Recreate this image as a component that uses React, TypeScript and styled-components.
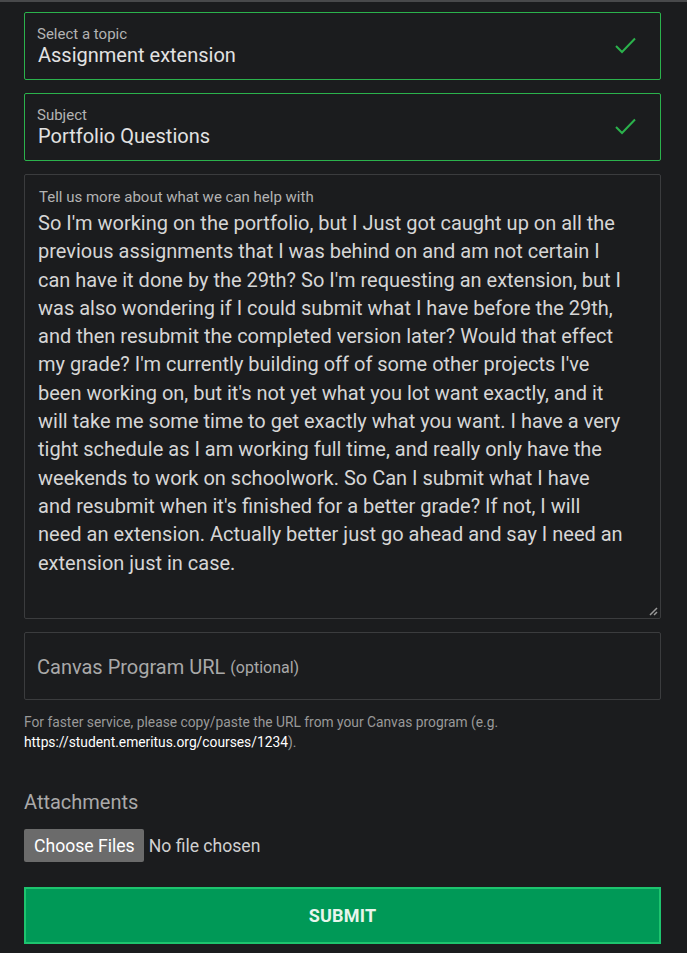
import React from "react";
import styled, { createGlobalStyle } from "styled-components";

const Global = createGlobalStyle`
  html, body { margin: 0; padding: 0; background: #1b1c1e; }
  body { font-family: Roboto, "Noto Sans", sans-serif; }
  * { box-sizing: border-box; }
`;

const Page = styled.div`
  border-top: 2px solid #48494b;
  padding: 10px 26px 0 24px;
  display: flex;
  flex-direction: column;
  min-height: 953px;
`;

const Field = styled.div<{ $valid?: boolean }>`
  height: 68px;
  border: 1px solid ${(p) => (p.$valid ? "#2bb24c" : "#3b3c3e")};
  border-radius: 2px;
  padding: 12px 12px 0 12px;
  display: flex;
  align-items: flex-start;
  justify-content: space-between;
  margin-bottom: 13px;
`;

const FieldText = styled.div`
  display: flex;
  flex-direction: column;
`;

const Label = styled.span`
  font-size: 15px;
  line-height: 18px;
  color: #b3b3b3;
`;

const Value = styled.span`
  font-size: 20px;
  line-height: 24px;
  color: #e2e2e2;
  padding-left: 1px;
`;

const Check = styled.svg`
  width: 24px;
  height: 24px;
  margin-top: 9px;
  margin-right: 11px;
`;

const TextArea = styled.div`
  position: relative;
  height: 445px;
  border: 1px solid #3b3c3e;
  border-radius: 2px;
  padding: 13px 12px 0 13px;
  margin-bottom: 13px;
`;

const AreaLabel = styled.div`
  font-size: 15px;
  line-height: 18px;
  color: #b3b3b3;
  margin-left: 1px;
`;

const Body = styled.div`
  font-size: 20px;
  line-height: 28.3px;
  color: #d6d6d6;
  margin-top: 3px;
`;

const Line = styled.span`
  display: block;
  white-space: nowrap;
`;

const Grip = styled.svg`
  position: absolute;
  right: 2px;
  bottom: 2px;
  width: 10px;
  height: 10px;
`;

const UrlField = styled.div`
  height: 68px;
  border: 1px solid #3b3c3e;
  border-radius: 2px;
  padding: 0 12px;
  display: flex;
  align-items: center;
  padding-top: 2px;
  margin-bottom: 12px;
`;

const UrlLabel = styled.span`
  font-size: 20px;
  color: #a9a9a9;
`;

const Optional = styled.span`
  font-size: 16px;
  color: #a9a9a9;
  margin-left: 5px;
`;

const Help = styled.p`
  margin: 0;
  font-size: 13.8px;
  line-height: 20px;
  color: #999999;
`;

const Link = styled.span`
  color: #ffffff;
`;

const Attach = styled.div`
  margin-top: 38px;
  font-size: 20px;
  line-height: 24px;
  color: #a9a9a9;
`;

const FileRow = styled.div`
  display: flex;
  align-items: center;
  margin-top: 15px;
  gap: 5px;
`;

const FileButton = styled.button`
  height: 33px;
  padding: 0 9px 0 10px;
  background: #6b6b6b;
  border: none;
  border-radius: 2px;
  color: #ffffff;
  font-family: Roboto, sans-serif;
  font-size: 17.6px;
`;

const NoFile = styled.span`
  font-size: 17.6px;
  color: #d0d0d0;
`;

const Submit = styled.button`
  margin-top: 25px;
  height: 57px;
  width: 100%;
  background: #009957;
  border: 2px solid #1dc46e;
  color: #e8f5ec;
  font-family: Roboto, sans-serif;
  font-weight: 700;
  font-size: 18px;
  letter-spacing: 0.2px;
`;

const lines = [
  "So I'm working on the portfolio, but I Just got caught up on all the",
  "previous assignments that I was behind on and am not certain I",
  "can have it done by the 29th? So I'm requesting an extension, but I",
  "was also wondering if I could submit what I have before the 29th,",
  "and then resubmit the completed version later? Would that effect",
  "my grade? I'm currently building off of some other projects I've",
  "been working on, but it's not yet what you lot want exactly, and it",
  "will take me some time to get exactly what you want. I have a very",
  "tight schedule as I am working full time, and really only have the",
  "weekends to work on schoolwork. So Can I submit what I have",
  "and resubmit when it's finished for a better grade? If not, I will",
  "need an extension. Actually better just go ahead and say I need an",
  "extension just in case.",
];

const CheckIcon = () => (
  <Check viewBox="0 0 24 24">
    <path d="M3 12 L9 18 L22 4.5" fill="none" stroke="#2bb24c" strokeWidth="2" />
  </Check>
);

export default function App() {
  return (
    <>
      <Global />
      <Page>
        <Field $valid>
          <FieldText>
            <Label>Select a topic</Label>
            <Value>Assignment extension</Value>
          </FieldText>
          <CheckIcon />
        </Field>
        <Field $valid>
          <FieldText>
            <Label>Subject</Label>
            <Value>Portfolio Questions</Value>
          </FieldText>
          <CheckIcon />
        </Field>
        <TextArea>
          <AreaLabel>Tell us more about what we can help with</AreaLabel>
          <Body>
            {lines.map((l, i) => (
              <Line key={i}>{l}</Line>
            ))}
          </Body>
          <Grip viewBox="0 0 10 10">
            <path d="M2 9 L9 2 M6 9 L9 6" stroke="#9a9a9a" strokeWidth="1.5" />
          </Grip>
        </TextArea>
        <UrlField>
          <UrlLabel>Canvas Program URL</UrlLabel>
          <Optional>(optional)</Optional>
        </UrlField>
        <Help>
          For faster service, please copy/paste the URL from your Canvas program (e.g.
          <br />
          <Link>https://student.emeritus.org/courses/1234</Link>).
        </Help>
        <Attach>Attachments</Attach>
        <FileRow>
          <FileButton>Choose Files</FileButton>
          <NoFile>No file chosen</NoFile>
        </FileRow>
        <Submit>SUBMIT</Submit>
      </Page>
    </>
  );
}
